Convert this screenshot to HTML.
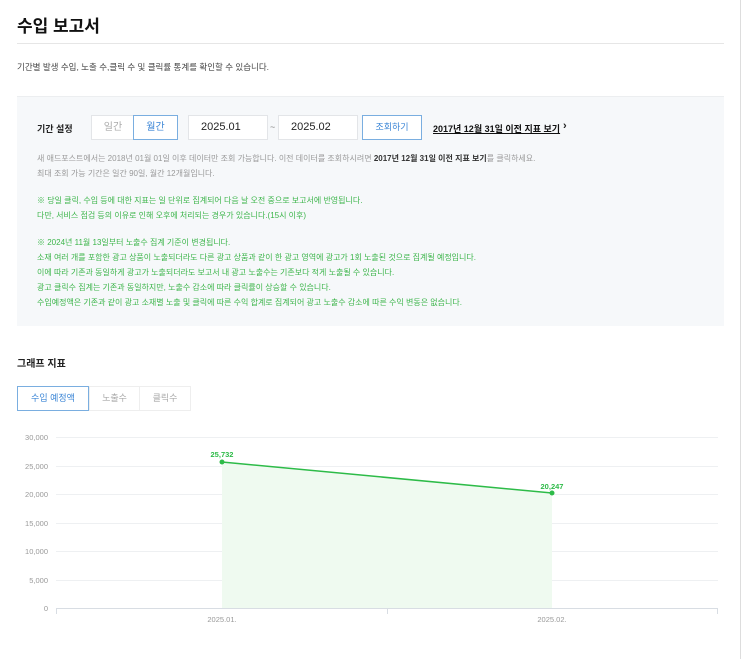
<!DOCTYPE html>
<html><head><meta charset="utf-8"><style>
*{margin:0;padding:0;box-sizing:border-box}
body{width:743px;height:659px;background:#fff;font-family:"Liberation Sans","Noto Sans CJK KR",sans-serif;position:relative;overflow:hidden;color:#222}
.a{position:absolute;white-space:nowrap}
.box{position:absolute;left:17px;top:96px;width:707px;height:230px;background:#f6f8fa;border-top:1px solid #eceef0}
.btn{position:absolute;top:115px;height:25px;border:1px solid #e3e5e8;background:#fff;font-size:10px;text-align:center;line-height:23px;color:#aaa}
.g{color:#3cb54a;font-size:8px}
.gr{color:#999;font-size:8px}
</style></head><body>
<div class="a" style="left:17px;top:12px;font-size:17px;font-weight:bold;color:#111">수입 보고서</div>
<div class="a" style="left:17px;top:43px;width:707px;height:1px;background:#e6e6e6"></div>
<div class="a" style="left:17px;top:61px;font-size:8.5px;color:#444">기간별 발생 수입, 노출 수,클릭 수 및 클릭률 통계를 확인할 수 있습니다.</div>
<div class="a" style="left:740px;top:0;width:1px;height:659px;background:#ddd"></div>
<div class="box"></div>
<div class="a" style="left:37px;top:122px;font-size:9px;font-weight:bold">기간 설정</div>
<div class="btn" style="left:91px;width:43px;border-right:none">일간</div>
<div class="btn" style="left:133px;width:45px;border-color:#7aaee0;color:#3c86d6">월간</div>
<div class="btn" style="left:188px;width:80px;color:#222;font-size:11px;text-align:left;padding-left:12px">2025.01</div>
<div class="a" style="left:270px;top:122px;font-size:9px;color:#888">~</div>
<div class="btn" style="left:278px;width:80px;color:#222;font-size:11px;text-align:left;padding-left:12px">2025.02</div>
<div class="btn" style="left:362px;width:60px;border-color:#7aaee0;color:#3c86d6;font-size:9px">조회하기</div>
<div class="a" style="left:433px;top:122px;font-size:9px;font-weight:bold;text-decoration:underline;color:#111">2017년 12월 31일 이전 지표 보기</div>
<div class="a" style="left:563px;top:120px;font-size:11px;font-weight:bold">›</div>
<div class="a gr" style="left:37px;top:153px">새 애드포스트에서는 2018년 01월 01일 이후 데이터만 조회 가능합니다. 이전 데이터를 조회하시려면 <b style="color:#333">2017년 12월 31일 이전 지표 보기</b>를 클릭하세요.</div>
<div class="a gr" style="left:37px;top:168px">최대 조회 가능 기간은 일간 90일, 월간 12개월입니다.</div>
<div class="a g" style="left:37px;top:195px">※ 당일 클릭, 수입 등에 대한 지표는 일 단위로 집계되어 다음 날 오전 중으로 보고서에 반영됩니다.</div>
<div class="a g" style="left:37px;top:210px">다만, 서비스 점검 등의 이유로 인해 오후에 처리되는 경우가 있습니다.(15시 이후)</div>
<div class="a g" style="left:37px;top:237px">※ 2024년 11월 13일부터 노출수 집계 기준이 변경됩니다.</div>
<div class="a g" style="left:37px;top:252px">소재 여러 개를 포함한 광고 상품이 노출되더라도 다른 광고 상품과 같이 한 광고 영역에 광고가 1회 노출된 것으로 집계될 예정입니다.</div>
<div class="a g" style="left:37px;top:267px">이에 따라 기존과 동일하게 광고가 노출되더라도 보고서 내 광고 노출수는 기존보다 적게 노출될 수 있습니다.</div>
<div class="a g" style="left:37px;top:282px">광고 클릭수 집계는 기존과 동일하지만, 노출수 감소에 따라 클릭률이 상승할 수 있습니다.</div>
<div class="a g" style="left:37px;top:297px">수입예정액은 기존과 같이 광고 소재별 노출 및 클릭에 따른 수익 합계로 집계되어 광고 노출수 감소에 따른 수익 변동은 없습니다.</div>
<div class="a" style="left:17px;top:355px;font-size:10px;font-weight:bold">그래프 지표</div>
<div class="a" style="left:17px;top:386px;width:72px;height:25px;border:1px solid #7aaee0;font-size:9px;color:#3c86d6;text-align:center;line-height:23px">수입 예정액</div>
<div class="a" style="left:89px;top:386px;width:51px;height:25px;border:1px solid #eee;font-size:9px;color:#aaa;text-align:center;line-height:23px">노출수</div>
<div class="a" style="left:139px;top:386px;width:52px;height:25px;border:1px solid #eee;font-size:9px;color:#aaa;text-align:center;line-height:23px">클릭수</div>
<svg class="a" style="left:0;top:425px" width="743" height="205" viewBox="0 425 743 205">
<g stroke="#eef0f2" stroke-width="1">
<line x1="56" y1="437.5" x2="718" y2="437.5"/><line x1="56" y1="466.5" x2="718" y2="466.5"/><line x1="56" y1="494.5" x2="718" y2="494.5"/><line x1="56" y1="523.5" x2="718" y2="523.5"/><line x1="56" y1="551.5" x2="718" y2="551.5"/><line x1="56" y1="580.5" x2="718" y2="580.5"/></g>
<polygon points="222,462 552,493 552,609 222,609" fill="#effaf0"/>
<line x1="56" y1="608.5" x2="718" y2="608.5" stroke="#d8dde3"/>
<g stroke="#d8dde3"><line x1="56.5" y1="609" x2="56.5" y2="614"/><line x1="387.5" y1="609" x2="387.5" y2="614"/><line x1="717.5" y1="609" x2="717.5" y2="614"/></g>
<line x1="222" y1="462" x2="552" y2="493" stroke="#2dbb48" stroke-width="1.5"/>
<circle cx="222" cy="462" r="2.5" fill="#2dbb48"/><circle cx="552" cy="493" r="2.5" fill="#2dbb48"/>
<g font-size="7.5" fill="#999" text-anchor="end" font-family="Liberation Sans,sans-serif">
<text x="48" y="440">30,000</text><text x="48" y="469">25,000</text><text x="48" y="497">20,000</text><text x="48" y="526">15,000</text><text x="48" y="554">10,000</text><text x="48" y="583">5,000</text><text x="48" y="611">0</text></g>
<g font-size="7.5" fill="#999" text-anchor="middle" font-family="Liberation Sans,sans-serif"><text x="222" y="622">2025.01.</text><text x="552" y="622">2025.02.</text></g>
<g font-size="7.5" fill="#2dbb48" font-weight="bold" text-anchor="middle" font-family="Liberation Sans,sans-serif"><text x="222" y="457">25,732</text><text x="552" y="489">20,247</text></g>
</svg>
</body></html>
